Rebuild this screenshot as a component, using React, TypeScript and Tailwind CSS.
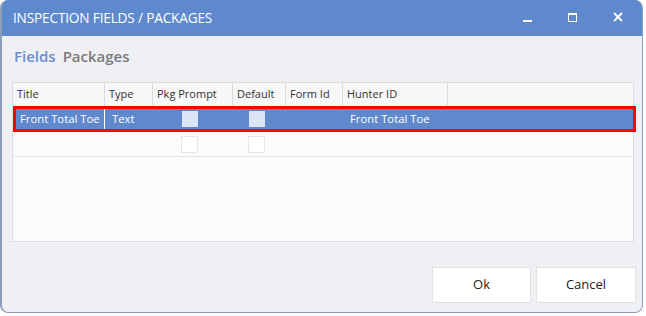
import React from 'react';

const cols = [
  { label: 'Title', w: 'w-[92px]' },
  { label: 'Type', w: 'w-[48px]' },
  { label: 'Pkg Prompt', w: 'w-[80px]' },
  { label: 'Default', w: 'w-[53px]' },
  { label: 'Form Id', w: 'w-[57px]' },
  { label: 'Hunter ID', w: 'w-[105px]' },
];

const App: React.FC = () => {
  return (
    <div className="w-[646px] h-[316px] bg-white relative font-['Open_Sans',sans-serif]">
      <div className="w-[643px] h-[313px] rounded-[8px] overflow-hidden flex flex-col bg-[#eff0f4] border-l-2 border-r border-b border-[#8e9db6]">
        {/* title bar */}
        <div className="h-9 shrink-0 bg-[#5f89cd] flex items-center pl-[11px] text-white text-[13.7px] tracking-[-0.2px]">
          <span>INSPECTION FIELDS / PACKAGES</span>
          <div className="ml-auto flex items-center h-full">
            <div className="w-[45px] h-full flex items-center justify-center">
              <div className="w-[9px] h-[2px] bg-white mt-[6px]" />
            </div>
            <div className="w-[45px] h-full flex items-center justify-center">
              <div className="w-[9px] h-[9px] border border-t-2 border-white mb-[2px]" />
            </div>
            <div className="w-[45px] h-full flex items-center justify-center mr-[2px]">
              <svg width="10" height="10" viewBox="0 0 10 10" className="mb-[2px]">
                <path d="M1 1 L9 9 M9 1 L1 9" stroke="white" strokeWidth="1.8" />
              </svg>
            </div>
          </div>
        </div>

        {/* tabs */}
        <div className="pl-[12px] pt-[9px] h-[46px] text-[15px] font-semibold flex gap-[7px]">
          <span className="text-[#6d8dcd]">Fields</span>
          <span className="text-[#7a7a7a]">Packages</span>
        </div>

        {/* table */}
        <div className="ml-[10px] w-[622px] h-[160px] border border-[#d9dce2] bg-[#fcfcfc] text-[11px] whitespace-nowrap">
          <div className="flex h-[23px] bg-[#f7f7f7] text-[#333]">
            {cols.map((c) => (
              <div key={c.label} className={`${c.w} border-r border-[#dcdcdc] pl-[4px] flex items-center`}>
                {c.label}
              </div>
            ))}
          </div>
          <div className="relative flex h-[26px] bg-[#6088cd] text-white text-[11.3px]">
            <div className="w-[92px] border-r border-white pl-[7px] flex items-center">Front Total Toe</div>
            <div className="w-[48px] pl-[7px] flex items-center">Text</div>
            <div className="w-[80px] pl-[29px] flex items-center">
              <div className="w-4 h-4 bg-[#dce4f5]" />
            </div>
            <div className="w-[53px] pl-[16px] flex items-center">
              <div className="w-4 h-4 bg-[#dce4f5]" />
            </div>
            <div className="w-[57px]" />
            <div className="w-[105px] pl-[7px] flex items-center">Front Total Toe</div>
            <div className="absolute left-0 -right-[3px] top-0 bottom-0 border-[3px] border-[#ff0000]" />
          </div>
          <div className="flex h-[25px] border-b border-[#e2e2e2]">
            <div className="w-[92px]" />
            <div className="w-[48px]" />
            <div className="w-[80px] pl-[28px] flex items-center">
              <div className="w-[17px] h-[17px] border border-[#e6e6e6] bg-white" />
            </div>
            <div className="w-[53px] pl-[15px] flex items-center">
              <div className="w-[17px] h-[17px] border border-[#e6e6e6] bg-white" />
            </div>
          </div>
        </div>

        {/* buttons */}
        <div className="mt-auto mb-[9px] flex justify-end gap-[5px] pr-[6px] text-[13px] text-[#222]">
          <button className="w-[99px] h-[36px] bg-white border border-[#e1e1e1]">Ok</button>
          <button className="w-[100px] h-[36px] bg-white border border-[#e1e1e1]">Cancel</button>
        </div>
      </div>
    </div>
  );
};

export default App;
